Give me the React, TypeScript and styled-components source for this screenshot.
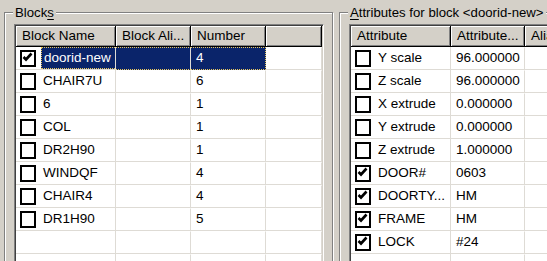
import styled, { createGlobalStyle } from "styled-components";

const GlobalStyle = createGlobalStyle`
  body {
    margin: 0;
    background: #d4d0c8;
  }
`;

const Page = styled.div`
  width: 547px;
  height: 261px;
  overflow: hidden;
  box-sizing: border-box;
  display: flex;
  gap: 6px;
  padding: 12px 0 0 4px;
  background: #d4d0c8;
  font-family: "Liberation Sans", Arial, sans-serif;
  font-size: 13.5px;
  color: #000;
`;

const GroupBox = styled.div<{ width: number }>`
  position: relative;
  flex: none;
  width: ${(p) => p.width}px;
  height: 300px;
  box-sizing: border-box;
  border: 1px solid #808080;
  box-shadow: inset 1px 1px 0 #fff, 1px 1px 0 #fff;
  padding: 11px 8px 0 9px;
  display: flex;
`;

const Legend = styled.span`
  position: absolute;
  top: -8px;
  left: 8px;
  padding: 0 2px;
  font-size: 13.2px;
  line-height: 15px;
  background: #d4d0c8;
  white-space: nowrap;

  u {
    text-decoration: underline;
    text-underline-offset: 2px;
  }
`;

const ListView = styled.div`
  flex: 1;
  min-width: 0;
  background: #fff;
  border: 1px solid;
  border-color: #808080 #fff #fff #808080;
  box-shadow: inset 1px 1px 0 #404040, inset -1px -1px 0 #d4d0c8;
  padding: 1px;
  overflow: hidden;
`;

const HeaderRow = styled.div<{ cols: string }>`
  display: grid;
  grid-template-columns: ${(p) => p.cols};
  height: 21px;
`;

const HeaderCell = styled.div`
  box-sizing: border-box;
  background: #d4d0c8;
  border-right: 1px solid #000;
  border-bottom: 1px solid #000;
  box-shadow: inset 1px 1px 0 #fff, inset -1px -1px 0 #808080;
  padding-left: 6px;
  line-height: 20px;
  white-space: nowrap;
  overflow: hidden;
`;

const Row = styled.div<{ cols: string }>`
  display: grid;
  grid-template-columns: ${(p) => p.cols};
  height: 23px;
`;

const Cell = styled.div<{ selected?: boolean; last?: boolean }>`
  box-sizing: border-box;
  border-right: 1px solid
    ${(p) => (p.selected && p.last ? "#e8c860" : "#dedbd5")};
  border-right-style: ${(p) => (p.selected && p.last ? "dotted" : "solid")};
  border-bottom: 1px solid #dedbd5;
  border-top: 1px solid transparent;
  padding-left: 5px;
  line-height: 20px;
  white-space: nowrap;
  overflow: hidden;
  background: ${(p) => (p.selected ? "#0a246a" : "transparent")};
  color: ${(p) => (p.selected ? "#fff" : "#000")};

  ${(p) =>
    p.selected &&
    `
    border-top: 1px dotted #e8c860;
    border-bottom: 1px dotted #e8c860;
  `}
`;

const NameCell = styled.div`
  box-sizing: border-box;
  display: flex;
  align-items: stretch;
  border-right: 1px solid #dedbd5;
  border-bottom: 1px solid #dedbd5;
  padding-left: 4px;
  overflow: hidden;
`;

const Label = styled.span<{ selected?: boolean }>`
  flex: 1;
  margin-left: 5px;
  padding-left: 2px;
  line-height: 21px;
  white-space: nowrap;
  background: ${(p) => (p.selected ? "#0a246a" : "transparent")};
  color: ${(p) => (p.selected ? "#fff" : "#000")};
  ${(p) =>
    p.selected &&
    `
    line-height: 20px;
    border: 1px dotted #e8c860;
    border-right: none;
  `}
`;

const Box = styled.span`
  flex: none;
  align-self: center;
  width: 16px;
  height: 17px;
  box-sizing: border-box;
  border: 2px solid #000;
  border-right-width: 2.5px;
  border-bottom-width: 2.5px;
  background: #fff;
  display: flex;
  align-items: flex-start;
  justify-content: flex-start;

  svg {
    display: block;
  }
`;

const CheckBox = ({ checked }: { checked: boolean }) => (
  <Box>
    {checked && (
      <svg width="11" height="11" viewBox="0 0 11 11">
        <polyline
          points="1.5,5 4,7.5 9.5,1.5"
          fill="none"
          stroke="#000"
          strokeWidth="2.6"
        />
      </svg>
    )}
  </Box>
);

const blockCols = "100px 75px 75px 1fr";
const attrCols = "100px 74px 75px 1fr";

const blocks = [
  { name: "doorid-new", alias: "", count: "4", checked: true },
  { name: "CHAIR7U", alias: "", count: "6", checked: false },
  { name: "6", alias: "", count: "1", checked: false },
  { name: "COL", alias: "", count: "1", checked: false },
  { name: "DR2H90", alias: "", count: "1", checked: false },
  { name: "WINDQF", alias: "", count: "4", checked: false },
  { name: "CHAIR4", alias: "", count: "4", checked: false },
  { name: "DR1H90", alias: "", count: "5", checked: false },
];

const attributes = [
  { name: "Y scale", value: "96.000000", checked: false },
  { name: "Z scale", value: "96.000000", checked: false },
  { name: "X extrude", value: "0.000000", checked: false },
  { name: "Y extrude", value: "0.000000", checked: false },
  { name: "Z extrude", value: "1.000000", checked: false },
  { name: "DOOR#", value: "0603", checked: true },
  { name: "DOORTY...", value: "HM", checked: true },
  { name: "FRAME", value: "HM", checked: true },
  { name: "LOCK", value: "#24", checked: true },
];

const EmptyRow = ({ cols }: { cols: string }) => (
  <Row cols={cols}>
    <NameCell />
    <Cell />
    <Cell />
    <Cell />
  </Row>
);

const App = () => {
  return (
    <>
      <GlobalStyle />
      <Page>
        <GroupBox width={329}>
          <Legend>
            Block<u>s</u>
          </Legend>
          <ListView>
            <HeaderRow cols={blockCols}>
              <HeaderCell>Block Name</HeaderCell>
              <HeaderCell>Block Ali...</HeaderCell>
              <HeaderCell>Number</HeaderCell>
              <HeaderCell />
            </HeaderRow>
            {blocks.map((b, i) => {
              const selected = i === 0;
              return (
                <Row key={b.name} cols={blockCols}>
                  <NameCell>
                    <CheckBox checked={b.checked} />
                    <Label selected={selected}>{b.name}</Label>
                  </NameCell>
                  <Cell selected={selected}>{b.alias}</Cell>
                  <Cell selected={selected} last>
                    {b.count}
                  </Cell>
                  <Cell />
                </Row>
              );
            })}
            <EmptyRow cols={blockCols} />
            <EmptyRow cols={blockCols} />
          </ListView>
        </GroupBox>
        <GroupBox width={240}>
          <Legend>
            <u>A</u>ttributes for block &lt;doorid-new&gt;
          </Legend>
          <ListView>
            <HeaderRow cols={attrCols}>
              <HeaderCell>Attribute</HeaderCell>
              <HeaderCell>Attribute...</HeaderCell>
              <HeaderCell>Alias</HeaderCell>
              <HeaderCell />
            </HeaderRow>
            {attributes.map((a) => (
              <Row key={a.name} cols={attrCols}>
                <NameCell>
                  <CheckBox checked={a.checked} />
                  <Label>{a.name}</Label>
                </NameCell>
                <Cell>{a.value}</Cell>
                <Cell />
                <Cell />
              </Row>
            ))}
            <EmptyRow cols={attrCols} />
          </ListView>
        </GroupBox>
      </Page>
    </>
  );
};

export default App;
